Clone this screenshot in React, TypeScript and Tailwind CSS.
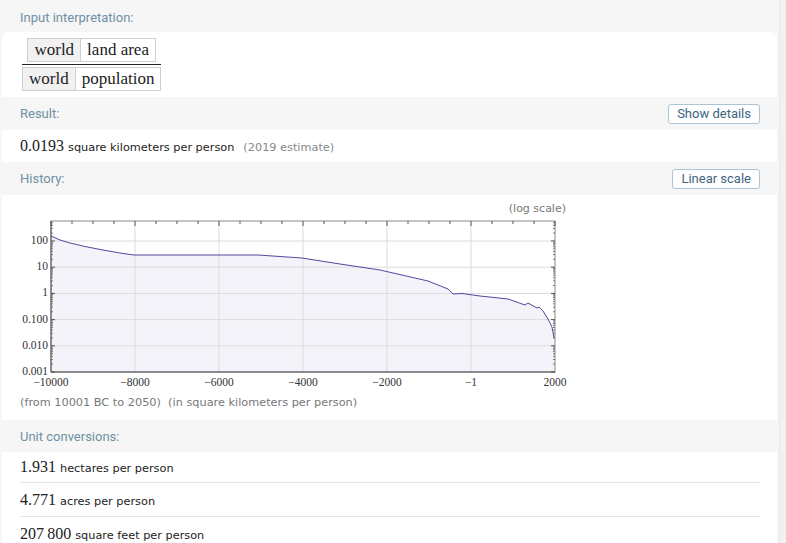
import React from "react";

const serif = "font-['Liberation_Serif',serif]";
const sans = "font-['DejaVu_Sans',sans-serif]";
const ui = "font-['Roboto',sans-serif]";

function Header({ title, action }: { title: string; action?: string }) {
  return (
    <div className="flex h-[33px] items-center justify-between pl-[18px] pr-[17px]">
      <span className={`${ui} text-[13px] text-[#6f90a4]`}>{title}</span>
      {action && (
        <button
          className={`${ui} h-[20px] rounded-[3px] border border-[#a9c5d6] bg-white px-[8px] text-[13px] leading-[18px] text-[#3e6580]`}
        >
          {action}
        </button>
      )}
    </div>
  );
}

function Cell({ children, gray }: { children: React.ReactNode; gray?: boolean }) {
  return (
    <div
      className={`flex h-[22px] items-center px-[6px] text-[17px] text-[#222] ${gray ? "bg-[#f1f1f1]" : "bg-white"}`}
    >
      {children}
    </div>
  );
}

const curve: [number, number][] = [
  [51, 236], [60, 240], [70, 243], [85, 246.5], [103, 250], [120, 253], [134, 255],
  [258, 255], [302, 258], [340, 264], [380, 270], [428, 281], [448, 289], [453, 294],
  [462, 293.5], [480, 296], [508, 299], [525, 305], [528, 303], [537, 308], [539, 307],
  [543, 311], [548, 319], [552, 327], [554, 338], [555, 338],
];

const L = 51;
const R = 555;
const T = 221;
const B = 372;
const xAt = (yr: number) => L + ((yr + 10000) / 12000) * (R - L);
const yAt = (v: number) => B - (Math.log10(v) + 3) * 26.2;

function Chart() {
  const line = curve.map(([x, y], i) => `${i ? "L" : "M"}${x} ${y}`).join(" ");
  const area = `${line} L${R} ${B} L${L} ${B} Z`;
  const xLabels: [number, string][] = [
    [-10000, "−10000"], [-8000, "−8000"], [-6000, "−6000"], [-4000, "−4000"],
    [-2000, "−2000"], [0, "−1"], [2000, "2000"],
  ];
  const yLabels: [number, string][] = [
    [100, "100"], [10, "10"], [1, "1"], [0.1, "0.100"], [0.01, "0.010"], [0.001, "0.001"],
  ];
  const minor: number[] = [];
  for (let d = -3; d < 3; d++) for (let m = 2; m <= 9; m++) {
    const y = yAt(m * Math.pow(10, d));
    if (y >= T) minor.push(y);
  }
  const topTicks: number[] = [];
  for (let yr = -10000; yr <= 2000; yr += 500) topTicks.push(yr);
  return (
    <svg width="580" height="200" className="block">
      <g transform="translate(-2,-195)">
        <text x="566" y="212" textAnchor="end" className={sans} fontSize="11" fill="#777">
          (log scale)
        </text>
        <path d={area} fill="#f4f3f9" />
        {xLabels.slice(1, 6).map(([yr]) => (
          <line key={yr} x1={xAt(yr)} x2={xAt(yr)} y1={T} y2={B} stroke="#dcdcdc" />
        ))}
        {yLabels.slice(0, 5).map(([v]) => (
          <line key={v} x1={L} x2={R} y1={yAt(v)} y2={yAt(v)} stroke="#dcdcdc" />
        ))}
        <path d={line} fill="none" stroke="#4d4ba0" strokeWidth="1" />
        <rect x={L} y={T} width={R - L} height={B - T} fill="none" stroke="#8a8a8a" />
        <line x1={L} x2={R} y1={B} y2={B} stroke="#555" />
        <line x1={L} x2={L} y1={T} y2={B} stroke="#555" />
        {topTicks.map((yr) => (
          <line
            key={yr}
            x1={xAt(yr)}
            x2={xAt(yr)}
            y1={T}
            y2={T + (yr % 2000 === 0 ? 5 : 3)}
            stroke="#555"
          />
        ))}
        {yLabels.map(([v]) => (
          <g key={v}>
            <line x1={L} x2={L + 4} y1={yAt(v)} y2={yAt(v)} stroke="#555" />
            <line x1={R} x2={R - 4} y1={yAt(v)} y2={yAt(v)} stroke="#555" />
          </g>
        ))}
        {minor.map((y, i) => (
          <g key={i}>
            <line x1={L} x2={L + 2} y1={y} y2={y} stroke="#777" />
            <line x1={R} x2={R - 2} y1={y} y2={y} stroke="#777" />
          </g>
        ))}
        {yLabels.map(([v, s]) => (
          <text key={s} x={L - 3} y={yAt(v) + 3} textAnchor="end" className={serif} fontSize="11.5" fill="#333">
            {s}
          </text>
        ))}
        {xLabels.map(([yr, s]) => (
          <text key={s} x={xAt(yr)} y={386} textAnchor="middle" className={serif} fontSize="11.5" fill="#333">
            {s}
          </text>
        ))}
      </g>
    </svg>
  );
}

function Value({ num, unit, note }: { num: string; unit: string; note?: string }) {
  return (
    <div className="flex items-baseline">
      <span className={`${serif} text-[16px] text-[#222]`}>{num}</span>
      <span className={`${sans} ml-[4px] text-[11.3px] text-[#222]`}>{unit}</span>
      {note && <span className={`${sans} ml-[9px] text-[11.3px] text-[#888]`}>{note}</span>}
    </div>
  );
}

export default function App() {
  return (
    <div className="flex h-[543px] w-[786px] overflow-hidden bg-[#f6f6f6]">
      <div className="w-[779px] px-[2px]">
        <div className="h-[32px] pt-px">
          <Header title="Input interpretation:" />
        </div>
        <div className="h-[65px] rounded-t-[6px] bg-white pl-[20px] pt-[5px]">
          <div className={`${serif} inline-flex flex-col items-center`}>
            <div className="flex border border-[#cfcfcf]">
              <Cell gray>world</Cell>
              <div className="border-l border-[#cfcfcf]">
                <Cell>land area</Cell>
              </div>
            </div>
            <div className="my-[2px] h-px w-full bg-[#222]" />
            <div className="flex border border-[#cfcfcf]">
              <Cell gray>world</Cell>
              <div className="border-l border-[#cfcfcf]">
                <Cell>population</Cell>
              </div>
            </div>
          </div>
        </div>
        <Header title="Result:" action="Show details" />
        <div className="flex h-[32px] items-center bg-white pl-[18px]">
          <Value num="0.0193" unit="square kilometers per person" note="(2019 estimate)" />
        </div>
        <Header title="History:" action="Linear scale" />
        <div className="h-[225px] bg-white">
          <Chart />
          <div className={`${sans} pl-[18px] text-[11.3px] text-[#777]`}>
            (from 10001 BC to 2050)&nbsp; (in square kilometers per person)
          </div>
        </div>
        <div className="h-[32px]">
          <Header title="Unit conversions:" />
        </div>
        <div className="bg-white pl-[18px] pr-[17px]">
          <div className="flex h-[31px] items-center border-b border-[#e3e3e3]">
            <Value num="1.931" unit="hectares per person" />
          </div>
          <div className="flex h-[34px] items-center border-b border-[#e3e3e3]">
            <Value num="4.771" unit="acres per person" />
          </div>
          <div className="flex h-[34px] items-center">
            <Value num={"207\u2009800"} unit="square feet per person" />
          </div>
        </div>
      </div>
      <div className="w-[7px] border-l border-[#e8e8e8] bg-[#f1f1f1]" />
    </div>
  );
}
